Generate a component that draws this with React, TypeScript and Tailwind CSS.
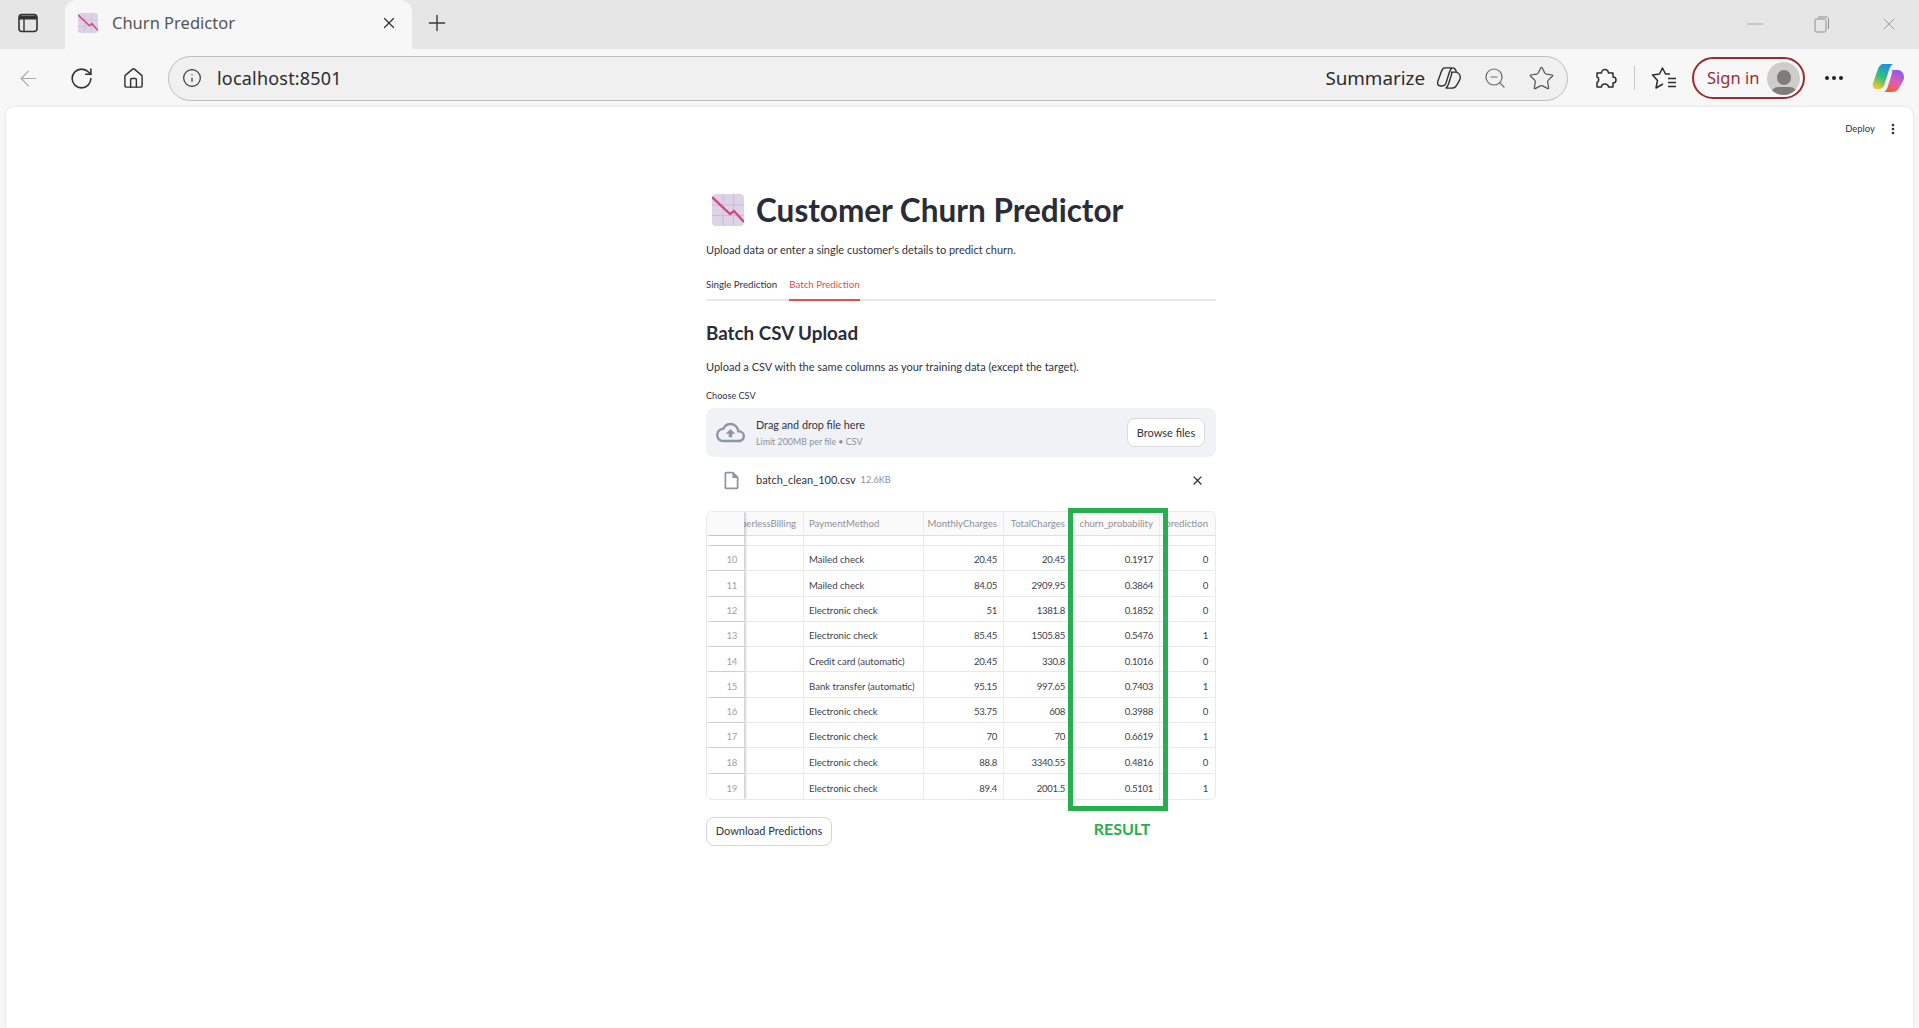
import { ArrowLeft, Home, Info, Plus, RotateCw, Star, X, ZoomOut } from 'lucide-react'
import { MdClose, MdMoreVert, MdOutlineCloudUpload, MdOutlineInsertDriveFile } from 'react-icons/md'

const rows = [
  ['10', 'Mailed check', '20.45', '20.45', '0.1917', '0'],
  ['11', 'Mailed check', '84.05', '2909.95', '0.3864', '0'],
  ['12', 'Electronic check', '51', '1381.8', '0.1852', '0'],
  ['13', 'Electronic check', '85.45', '1505.85', '0.5476', '1'],
  ['14', 'Credit card (automatic)', '20.45', '330.8', '0.1016', '0'],
  ['15', 'Bank transfer (automatic)', '95.15', '997.65', '0.7403', '1'],
  ['16', 'Electronic check', '53.75', '608', '0.3988', '0'],
  ['17', 'Electronic check', '70', '70', '0.6619', '1'],
  ['18', 'Electronic check', '88.8', '3340.55', '0.4816', '0'],
  ['19', 'Electronic check', '89.4', '2001.5', '0.5101', '1'],
]

const leftRibbon = 'M11 1H21C19 2 18 4 17 7L13 20C12 24 10 26 7 26H5C2 26 0 24 1 20L6 6C7 3 9 1 11 1Z'
const rightRibbon = 'M20 7H26C29 7 32 10 32 14C32 15 32 16 31 18L27 25C25 28 23 29 20 29H12C14 28 15 26 16 23L20 10C20.500 8.500 20 7 20 7Z'

function ChartEmoji({ size }: { size: number }) {
  return (
    <svg width={size} height={size} viewBox="0 0 32 32">
      <rect width="32" height="32" rx="4" fill="#ddd3e6" />
      <path d="M0 11h32M0 21.500h32M11 0v32M21.500 0v32" stroke="#c9bdd8" strokeWidth="1" />
      <path d="M0 3l18 17 4-3 10 11" fill="none" stroke="#d4477c" strokeWidth="2.400" />
    </svg>
  )
}

function Copilot() {
  return (
    <svg width="33" height="30" viewBox="0 0 33 30">
      <defs>
        <linearGradient id="cpA" x1="0.7" y1="0" x2="0.3" y2="1">
          <stop offset="0" stopColor="#1d8fe6" />
          <stop offset="0.55" stopColor="#35c07a" />
          <stop offset="1" stopColor="#f2c72e" />
        </linearGradient>
        <linearGradient id="cpB" x1="0.7" y1="0" x2="0.3" y2="1">
          <stop offset="0" stopColor="#8a5be8" />
          <stop offset="0.55" stopColor="#e45bb0" />
          <stop offset="1" stopColor="#f0622e" />
        </linearGradient>
      </defs>
      <path d={leftRibbon} fill="url(#cpA)" />
      <path d={rightRibbon} fill="url(#cpB)" />
    </svg>
  )
}

function Tabstrip() {
  return (
    <div className="flex h-[49px] items-end bg-[#e6e6e6] text-[#3b3b3b]">
      <div className="flex h-[49px] w-[65px] items-center justify-center pb-[3px] pr-[9px]">
        <svg width="20" height="20" viewBox="0 0 20 20" fill="none">
          <rect x="1" y="1.500" width="18" height="17" rx="3" stroke="#333" strokeWidth="1.600" />
          <path d="M1 2.500h18v4H1z" fill="#333" />
          <path d="M6 6v12" stroke="#333" strokeWidth="1.400" />
        </svg>
      </div>
      <div className="flex h-[49px] w-[347px] items-center rounded-t-xl bg-[#f7f7f7] pb-[3px] pl-[13px] pr-[14px]">
        <ChartEmoji size={20} />
        <span className="ml-[14px] flex-1 text-[16.500px] text-[#555]">Churn Predictor</span>
        <X size={18} strokeWidth={1.600} className="text-[#333]" />
      </div>
      <div className="flex h-[49px] w-[50px] items-center justify-center pb-[4px]">
        <Plus size={26} strokeWidth={1.300} />
      </div>
      <div className="flex-1" />
      <div className="flex h-[49px] items-center pb-[2px] pr-[20px] text-[#8d8d8d]">
        <svg width="16" height="2" viewBox="0 0 16 2" className="mr-[51px]">
          <path d="M0 1h16" stroke="#a6a6a6" strokeWidth="1" />
        </svg>
        <svg width="16" height="18" viewBox="0 0 16 18" fill="none" className="mr-[49px]">
          <rect x="1" y="4" width="11" height="13" rx="1.500" stroke="#8d8d8d" />
          <path d="M4 2h8.500c1 0 2 1 2 2v10" stroke="#8d8d8d" />
        </svg>
        <X size={20} strokeWidth={1} />
      </div>
    </div>
  )
}

function Toolbar() {
  return (
    <div className="flex h-[58px] items-center bg-[#f7f7f7] text-[#333]">
      <div className="flex w-[168px] items-center pl-[16px]">
        <ArrowLeft size={25} strokeWidth={1.100} className="text-[#a9a9a9]" />
        <RotateCw size={25} strokeWidth={1.500} className="ml-[28px]" />
        <Home size={23} strokeWidth={1.500} className="ml-[28px]" />
      </div>
      <div className="flex h-[45px] w-[1400px] items-center rounded-full border border-[#bdbdbd] bg-[#f0f0f0] pl-[13px] pr-[12px]">
        <Info size={20} strokeWidth={1.400} />
        <span className="ml-[15px] flex-1 text-[18px] tracking-[.2px] text-[#2c2c2c]">localhost:8501</span>
        <span className="text-[18.800px] text-[#2c2c2c]">Summarize</span>
        <svg width="24" height="22" viewBox="0 0 33 30" fill="none" stroke="#2c2c2c" strokeWidth="1.900" className="ml-[12px]">
          <path d={leftRibbon} />
          <path d={rightRibbon} />
          <path d="M21 1c3 0 5 2 5.500 6" />
        </svg>
        <ZoomOut size={24} strokeWidth={1.200} className="ml-[22px] text-[#6a6a6a]" />
        <Star size={27} strokeWidth={1.100} className="ml-[21px] text-[#555]" />
      </div>
      <svg width="24" height="24" viewBox="0 0 24 24" fill="none" stroke="#2c2c2c" strokeWidth="1.500" strokeLinejoin="round" className="ml-[25px]">
        <path d="M4 7h4.500a3.500 3.500 0 0 1 7 0H20v4a3 3 0 0 1 0 6v4h-4.500a3.500 3 0 0 0-7 0H4v-4.500a3 3 0 0 0 0-5.500z" />
      </svg>
      <div className="ml-[17px] h-[24px] w-px bg-[#c8c8c8]" />
      <svg width="26" height="24" viewBox="0 0 26 24" fill="none" stroke="#2c2c2c" strokeWidth="1.500" strokeLinejoin="round" className="ml-[16px]">
        <path d="M19 8h-4.500L11.500 2 8.500 8 1.500 9l5 5.500L5 22l7-4" />
        <path d="M17 12.500h8M17 16.500h8M17 20.500h8" />
      </svg>
      <div className="ml-[15px] flex h-[42px] w-[113px] items-center justify-between rounded-full border-2 border-[#9c2b2f] pl-[13px] pr-[3px]">
        <span className="text-[16.500px] text-[#9c2b2f]">Sign in</span>
        <div className="flex h-[33px] w-[33px] flex-col items-center justify-end overflow-hidden rounded-full bg-[#cfcdcb]">
          <div className="mb-[2px] h-[15px] w-[14px] rounded-full bg-[#7f7d7b]" />
          <div className="mb-[-6px] h-[14px] w-[26px] rounded-full bg-[#7f7d7b]" />
        </div>
      </div>
      <div className="ml-[20px] flex gap-[3.500px]">
        <div className="h-[3.500px] w-[3.500px] rounded-full bg-[#222]" />
        <div className="h-[3.500px] w-[3.500px] rounded-full bg-[#222]" />
        <div className="h-[3.500px] w-[3.500px] rounded-full bg-[#222]" />
      </div>
      <div className="ml-[29px]">
        <Copilot />
      </div>
    </div>
  )
}

function DataTable() {
  const grid = 'grid grid-cols-[37px_60px_120px_80px_69px_87px_55px]'
  const cell = 'flex items-center overflow-hidden whitespace-nowrap border-r border-[#ececef]'
  const frozen = 'relative z-10 border-r-0 shadow-[2px_0_2px_rgba(0,0,0,.18)]'
  const num = 'justify-end tracking-[-.3px] pt-[4px]'
  return (
    <div className="relative mt-[8px]">
      <div className="overflow-hidden rounded-md border border-[#e8e9ec] text-[9.600px] leading-none">
        {/* Header */}
        <div className={`${grid} h-[24px] border-b border-[#dfe0e4] bg-[#fafafb] text-[#8e9099]`}>
          <div className={`${cell} ${frozen} bg-[#fafafb]`} />
          <div className={`${cell} justify-end pr-[7px] pt-[1px]`}>PaperlessBilling</div>
          <div className={`${cell} pl-[5px] pt-[1px]`}>PaymentMethod</div>
          <div className={`${cell} justify-end pr-[6px] pt-[1px]`}>MonthlyCharges</div>
          <div className={`${cell} justify-end pr-[7px] pt-[1px]`}>TotalCharges</div>
          <div className={`${cell} justify-end pr-[6px] pt-[1px]`}>churn_probability</div>
          <div className={`${cell} justify-end border-r-0 pr-[7px] pt-[1px]`}>prediction</div>
        </div>
        <div className={`${grid} h-[10px] border-b border-[#e8e9ec]`}>
          <div className={`${cell} ${frozen} bg-white`} />
          <div className={cell} />
          <div className={cell} />
          <div className={cell} />
          <div className={cell} />
          <div className={cell} />
          <div className={`${cell} border-r-0`} />
        </div>
        {rows.map((r, i) => (
          <div key={r[0]} className={`${grid} h-[25.300px] text-[#3d3f4b] ${i < rows.length - 1 ? 'border-b border-[#e8e9ec]' : ''}`}>
            <div className={`${cell} ${frozen} ${num} bg-white pr-[7px] text-[#a0a2aa]`}>{r[0]}</div>
            <div className={cell} />
            <div className={`${cell} pl-[5px] pt-[4px]`}>{r[1]}</div>
            <div className={`${cell} ${num} pr-[6px]`}>{r[2]}</div>
            <div className={`${cell} ${num} pr-[7px]`}>{r[3]}</div>
            <div className={`${cell} ${num} pr-[6px]`}>{r[4]}</div>
            <div className={`${cell} ${num} border-r-0 pr-[7px]`}>{r[5]}</div>
          </div>
        ))}
      </div>

      {/* Green annotation over the table */}
      <div className="absolute left-[362px] top-[-3px] h-[303px] w-[100px] border-[5px] border-[#27ae4f]">
        <span className="absolute left-[4px] right-[-4px] top-[305px] text-center text-[16px] font-bold leading-[22px] text-[#27ae4f]">RESULT</span>
      </div>
    </div>
  )
}

function Content() {
  return (
    <div className="ml-[700px] w-[510px] pt-[83px] font-['Lato',sans-serif] text-[#31333f]">
      <div className="flex h-[40px] items-center pl-[6px]">
        <ChartEmoji size={32} />
        <h1 className="ml-[12px] pt-[1px] text-[31.500px] font-bold leading-none text-[#2a2c38]">Customer Churn Predictor</h1>
      </div>
      <p className="mt-[11px] text-[11px] leading-[18px]">Upload data or enter a single customer's details to predict churn.</p>
      <div className="mt-[13px] flex h-[29px] gap-[12px] border-b-2 border-[#e9e9ec] text-[9.700px]">
        <div className="flex h-[29px] items-center pb-[4px]">Single Prediction</div>
        <div className="flex h-[29px] items-center border-b-2 border-[#e0504f] pb-[2px] text-[#e0504f]">Batch Prediction</div>
      </div>
      <h2 className="mt-[18px] text-[18.800px] font-bold leading-[28px] text-[#2a2c38]">Batch CSV Upload</h2>
      <p className="mt-[11px] text-[11px] leading-[18px]">Upload a CSV with the same columns as your training data (except the target).</p>
      <div className="mt-[12px] pt-[1px] text-[9.100px] leading-[13px]">Choose CSV</div>
      <div className="mt-[6px] flex h-[49px] items-center rounded-lg bg-[#f0f2f6] pl-[10px] pr-[11px]">
        <MdOutlineCloudUpload size={29} className="text-[#8c95ab]" />
        <div className="ml-[11px] flex-1">
          <div className="text-[10.800px] leading-[16px]">Drag and drop file here</div>
          <div className="mt-[3px] text-[8.900px] leading-[12px] text-[#8e909a]">Limit 200MB per file • CSV</div>
        </div>
        <div className="flex h-[29px] w-[78px] items-center justify-center rounded-lg border border-[#d9dadf] bg-white pt-[1px] text-[11px]">Browse files</div>
      </div>
      <div className="flex h-[46px] items-center pl-[15px] pr-[11px]">
        <MdOutlineInsertDriveFile size={21} className="text-[#8c95ab]" />
        <span className="ml-[14px] text-[11px]">batch_clean_100.csv</span>
        <span className="ml-[5px] flex-1 text-[9.200px] text-[#8e909a]">12.6KB</span>
        <MdClose size={15} className="text-[#31333f]" />
      </div>
      <DataTable />
      <div className="mt-[17px] flex h-[29px] w-[126px] items-center justify-center rounded-lg border border-[#d3d4d9] text-[11px]">Download Predictions</div>
    </div>
  )
}

export default function App() {
  return (
    <div className="flex h-screen flex-col overflow-hidden bg-[#f7f7f7] font-['Noto_Sans',sans-serif]">
      <Tabstrip />
      <Toolbar />
      <main className="relative mx-[6px] flex-1 rounded-t-lg bg-white shadow-[0_0_3px_rgba(0,0,0,.12)]">
        <div className="absolute right-[12px] top-[14px] flex items-center font-['Lato',sans-serif] text-[9.500px] text-[#31333f]">
          <span>Deploy</span>
          <MdMoreVert size={16} className="ml-[10px]" />
        </div>
        <Content />
      </main>
    </div>
  )
}
